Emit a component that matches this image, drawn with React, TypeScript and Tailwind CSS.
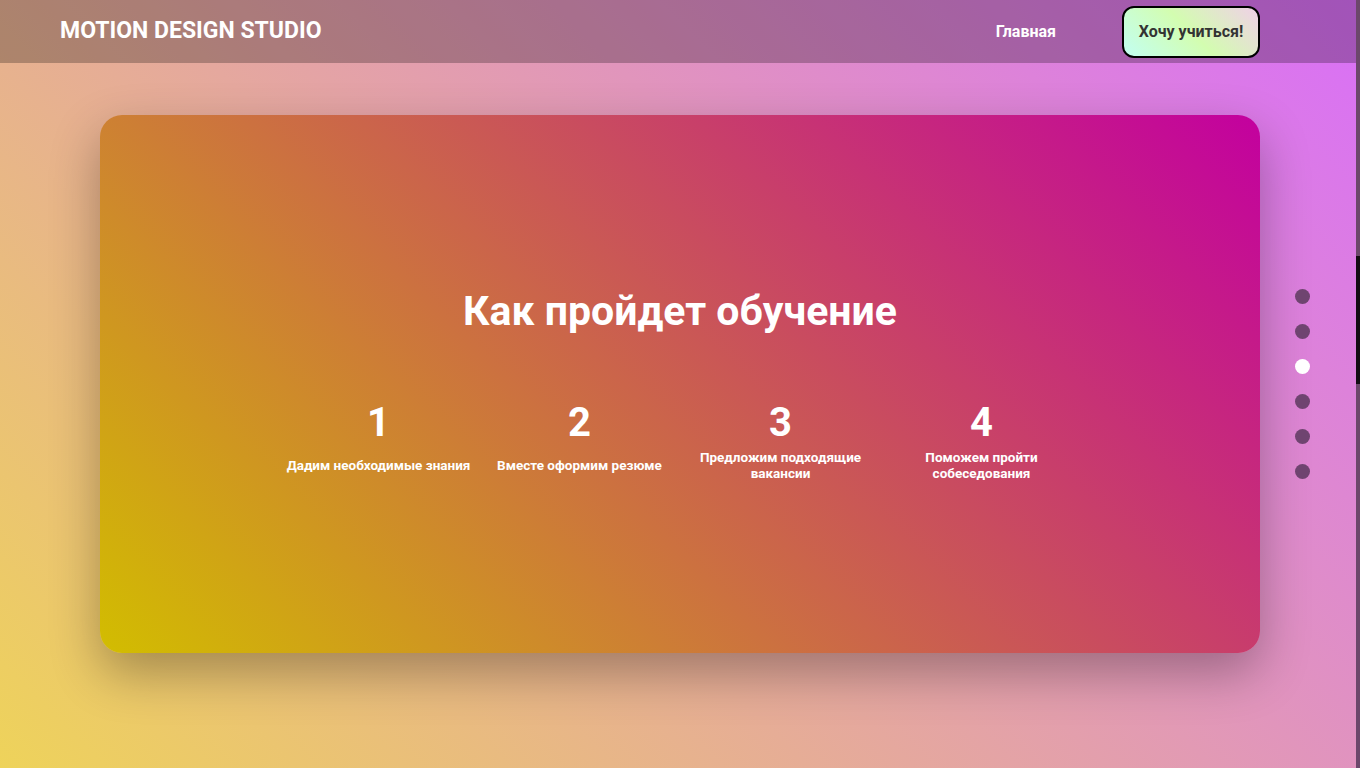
import React from "react";

const steps = [
  { n: "1", text: "Дадим необходимые знания" },
  { n: "2", text: "Вместе оформим резюме" },
  { n: "3", text: "Предложим подходящие вакансии" },
  { n: "4", text: "Поможем пройти собеседования" },
];

function Header() {
  return (
    <header className="h-[63px] flex items-center pl-[60px] pr-[100px] bg-black/25">
      <a href="#" className="text-[23px] font-bold text-white">
        MOTION DESIGN STUDIO
      </a>
      <nav className="ml-auto flex items-center gap-[66px]">
        <a href="#" className="text-[16px] font-bold text-white">
          Главная
        </a>
        <button className="w-[138px] h-[52px] rounded-[12px] border-2 border-black bg-[linear-gradient(45deg,#c2fff2,#d3fdb0_50%,#f0d0e8)] text-[16px] font-bold text-[#333]">
          Хочу учиться!
        </button>
      </nav>
    </header>
  );
}

function SideDots({ active }: { active: number }) {
  return (
    <div className="absolute right-[50px] top-1/2 -translate-y-1/2 flex flex-col gap-[20px]">
      {[0, 1, 2, 3, 4, 5].map((i) => (
        <span
          key={i}
          className={
            i === active
              ? "block w-[15px] h-[15px] rounded-full bg-white"
              : "block w-[15px] h-[15px] rounded-full bg-[#6f4470]"
          }
        />
      ))}
    </div>
  );
}

export default function App() {
  return (
    <div
      className="relative w-full h-[768px] overflow-hidden flex flex-col bg-[linear-gradient(45deg,#eed35a,#d96ff8)]"
      style={{ fontFamily: "Roboto, 'Liberation Sans', sans-serif" }}
    >
      <Header />

      <main className="flex-1 flex justify-center pt-[52px]">
        <section className="w-[1160px] h-[538px] rounded-[22px] bg-[linear-gradient(45deg,#d2bd00,#c3009f)] shadow-[0_20px_50px_rgba(0,0,0,0.3)] flex flex-col items-center justify-center text-white">
          <h2 className="text-[41px] leading-[48px] font-bold">
            Как пройдет обучение
          </h2>
          <div className="mt-[64px] w-[804px] grid grid-cols-4">
            {steps.map((s) => (
              <div key={s.n} className="flex flex-col items-center text-center">
                <span className="text-[40px] leading-[48px] font-bold">{s.n}</span>
                <p className="mt-[2px] h-[32px] px-[6px] flex items-center text-[13.5px] leading-[16px] font-bold">
                  {s.text}
                </p>
              </div>
            ))}
          </div>
        </section>
      </main>

      <SideDots active={2} />

      {/* scrollbar */}
      <div className="absolute right-0 top-0 w-[4px] h-full bg-[#6c476b]">
        <div className="mt-[256px] h-[128px] bg-[#130c13]" />
      </div>
    </div>
  );
}
